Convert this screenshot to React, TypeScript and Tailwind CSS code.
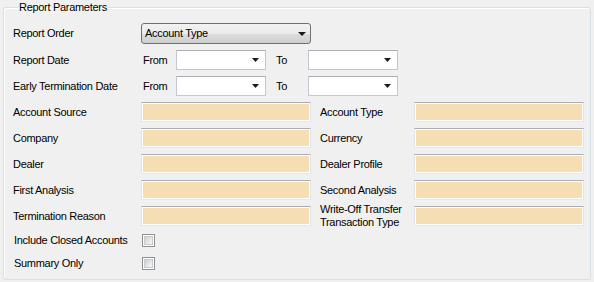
import type { ReactNode } from 'react';

/** Small black dropdown triangle */
const Arrow = ({ size = 'sm' }: { size?: 'sm' | 'md' }) => (
  <svg width={size === 'md' ? 8 : 7} height={4} viewBox={size === 'md' ? '0 0 8 4' : '0 0 7 4'} className="shrink-0">
    <path d={size === 'md' ? 'M0 0h8L4 4z' : 'M0 0h7L3.5 4z'} fill="#1a1a1a" />
  </svg>
);

/** Report Order combo box */
const ComboBox = ({ value }: { value: string }) => (
  <div className="flex h-[21px] w-[170px] items-center justify-between rounded-[3px] border border-[#707070] bg-[linear-gradient(#f2f2f2_0%,#ebebeb_50%,#dddddd_51%,#cfcfcf_100%)] pl-[3px] pr-[4px]">
    <span>{value}</span>
    <Arrow size="md" />
  </div>
);

/** Date picker box (empty) */
const DateBox = () => (
  <div className="flex h-[20px] w-[90px] items-center justify-end border border-[#c4c7cd] border-t-[#abadb3] bg-white pr-[6px]">
    <Arrow />
  </div>
);

/** Wheat-coloured lookup text field */
const LookupField = () => (
  <div className="h-[20px] w-[170px] border border-[#e2e3ea] border-t-[#abadb3] border-b-[#e3e9ef] bg-white p-px">
    <div className="h-full w-full bg-[#f5deb3]" />
  </div>
);

const CheckBox = () => (
  <div className="flex h-[13px] w-[13px] items-center justify-center border border-[#8e8f8f] bg-white">
    <div className="h-[9px] w-[9px] border border-[#c8c9cc] bg-[linear-gradient(135deg,#cbcfd5,#f7f7f7)]" />
  </div>
);

const Label = ({ children, w }: { children: ReactNode; w: string }) => (
  <div className={`${w} shrink-0 leading-[13px]`}>{children}</div>
);

interface FieldPair {
  left: string;
  right: ReactNode;
}

const fieldRows: FieldPair[] = [
  { left: 'Account Source', right: 'Account Type' },
  { left: 'Company', right: 'Currency' },
  { left: 'Dealer', right: 'Dealer Profile' },
  { left: 'First Analysis', right: 'Second Analysis' },
  {
    left: 'Termination Reason',
    right: (
      <>
        Write-Off Transfer
        <br />
        Transaction Type
      </>
    ),
  },
];

const App = () => {
  return (
    <div className="h-[282px] w-[594px] overflow-hidden bg-[#f0f0f0] px-[3px] pt-px font-['Liberation_Sans',Arial,sans-serif] text-[11px] tracking-[-0.3px] text-black">
      <fieldset className="h-[279px] rounded-[3px] border border-[#d5dfe5] pl-[9px] shadow-[inset_1px_1px_0_#fff]">
        <legend className="ml-[5px] px-[1px] leading-[13px]">Report Parameters</legend>

        <div className="flex flex-col">
          {/* Report order */}
          <div className="mt-[9px] flex h-[21px] items-center">
            <Label w="w-[128px]">Report Order</Label>
            <ComboBox value="Account Type" />
          </div>

          {/* Date ranges */}
          {['Report Date', 'Early Termination Date'].map((label) => (
            <div key={label} className="mt-[6px] flex h-[20px] items-center">
              <Label w="w-[130px]">{label}</Label>
              <span className="w-[33px]">From</span>
              <DateBox />
              <span className="w-[42px] pl-[10px]">To</span>
              <DateBox />
            </div>
          ))}

          {/* Lookup fields */}
          {fieldRows.map((row) => (
            <div key={row.left} className="mt-[6px] flex h-[20px] items-center">
              <Label w="w-[128px]">{row.left}</Label>
              <LookupField />
              <Label w="w-[103px] pl-[9px]">{row.right}</Label>
              <LookupField />
            </div>
          ))}

          {/* Checkboxes */}
          <div className="mt-[4px] flex h-[20px] items-center">
            <Label w="w-[129px] pl-px">Include Closed Accounts</Label>
            <CheckBox />
          </div>
          <div className="mt-[3px] flex h-[20px] items-center">
            <Label w="w-[129px] pl-px">Summary Only</Label>
            <CheckBox />
          </div>
        </div>
      </fieldset>
    </div>
  );
};

export default App;
